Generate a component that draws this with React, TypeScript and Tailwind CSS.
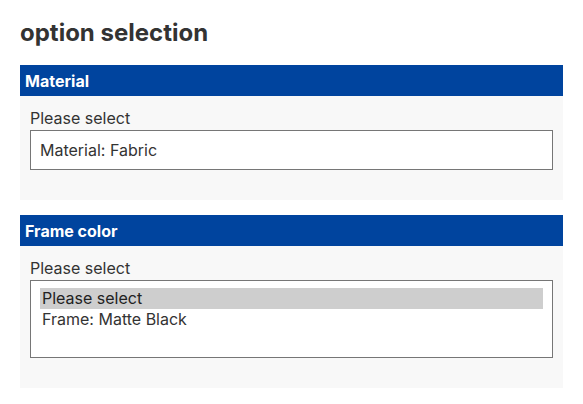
import { FC } from "react";

const Panel: FC<{ title: string; children: React.ReactNode }> = ({ title, children }) => {
  return (
    <div className="bg-[#f8f8f8]">
      <div className="bg-[#00449e] h-[31px] px-[5px] flex items-center text-white font-bold text-[16px]">
        {title}
      </div>
      <div className="px-[10px] pt-[12px] pb-[30px]">
        <div className="text-[16px] text-[#333] leading-[20px] mb-[2px]">Please select</div>
        {children}
      </div>
    </div>
  );
};

const App: FC = () => {
  return (
    <div
      className="bg-white min-h-screen w-screen px-[20px] pt-[19px]"
      style={{ fontFamily: "Inter, 'Liberation Sans', sans-serif" }}
    >
      <h1 className="text-[24px] font-bold text-[#333] leading-[28px] mb-[18px]">option selection</h1>
      <div className="flex flex-col gap-[15px]">
        <Panel title="Material">
          <div className="h-[40px] border border-[#767676] bg-white flex items-center px-[9px] text-[16px] text-[#333]">
            Material: Fabric
          </div>
        </Panel>
        <Panel title="Frame color">
          <div className="h-[78px] border border-[#767676] bg-white px-[9px] pt-[7px] text-[16px] text-[#222]">
            <div className="bg-[#cecece] h-[21px] leading-[21px] px-[2px]">Please select</div>
            <div className="h-[21px] leading-[21px] px-[2px] text-[#333]">Frame: Matte Black</div>
          </div>
        </Panel>
      </div>
    </div>
  );
};

export default App;
